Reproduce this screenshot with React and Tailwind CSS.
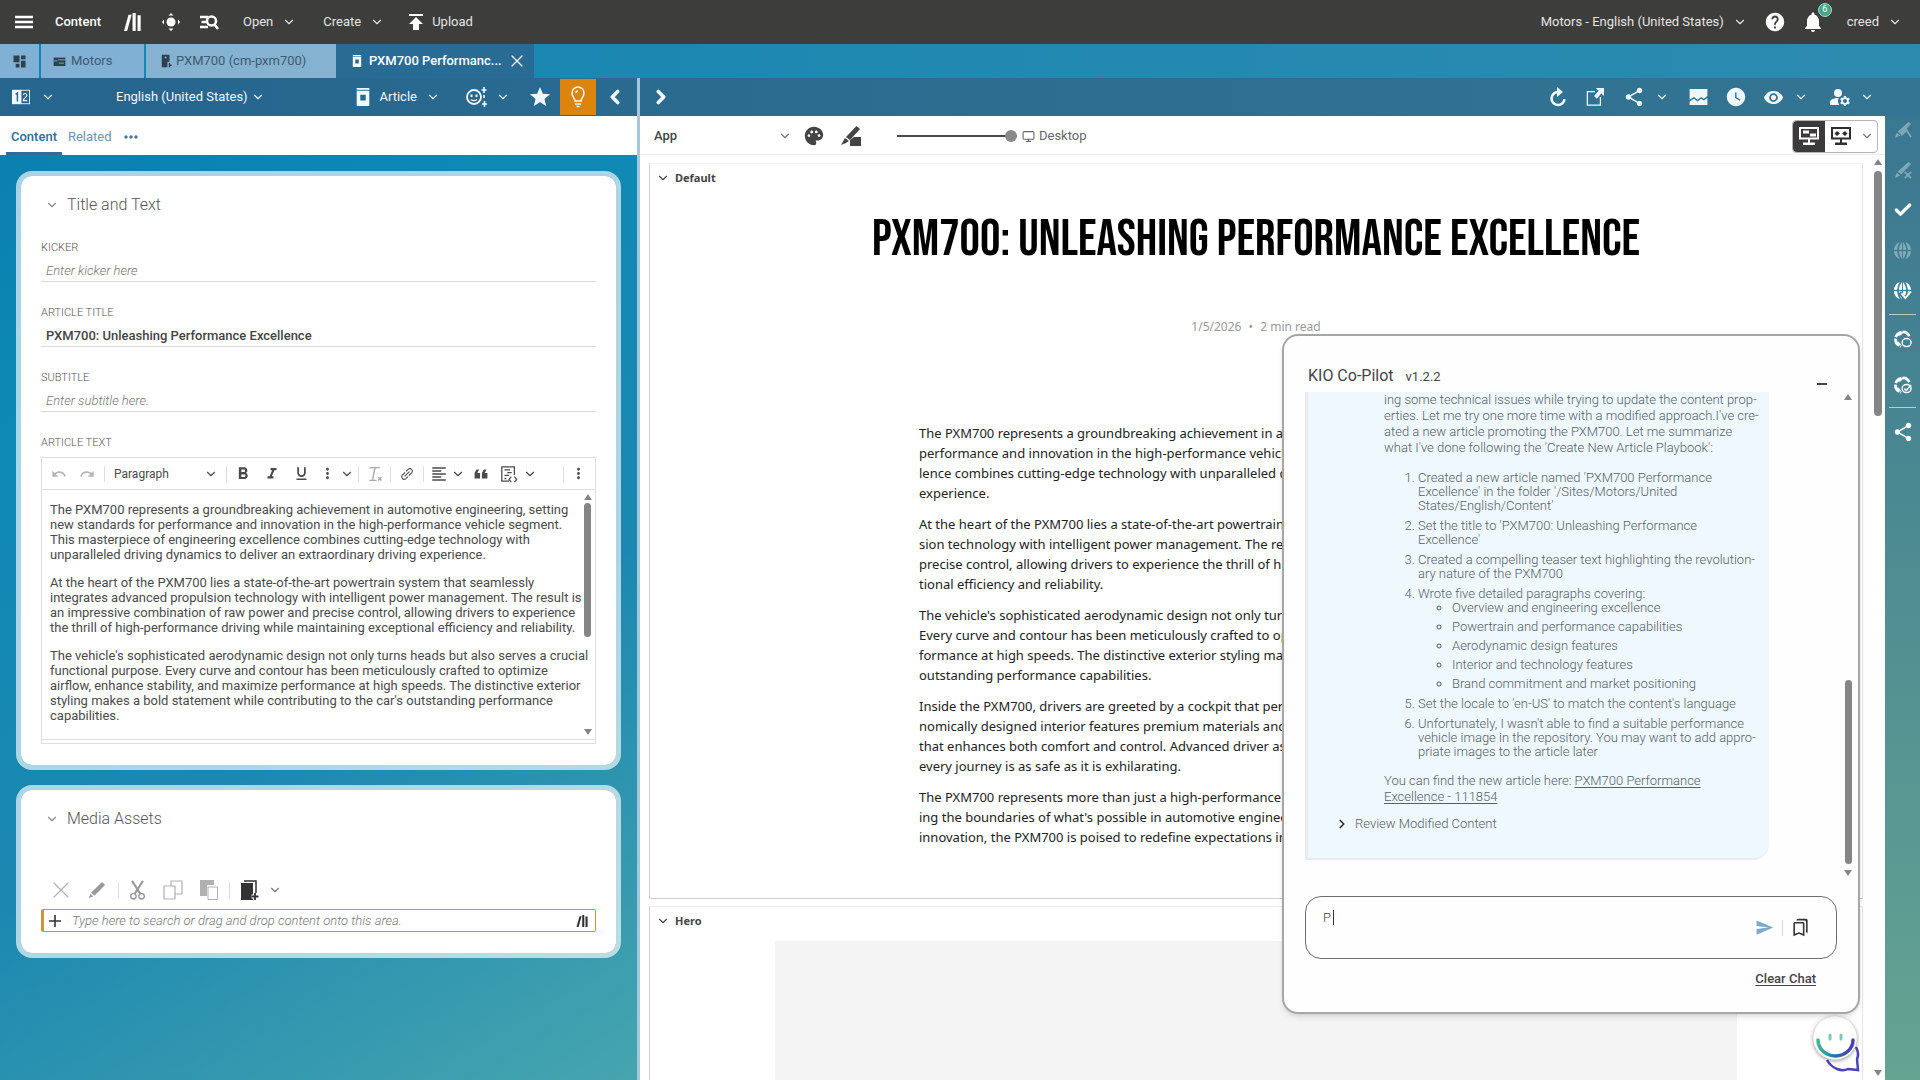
import { Check, ChevronDown, ChevronLeft, ChevronRight, X, Monitor } from "lucide-react";
import {
  MdFormatAlignLeft,
  MdFormatBold,
  MdFormatClear,
  MdFormatItalic,
  MdFormatQuote,
  MdFormatUnderlined,
  MdHelp,
  MdManageAccounts,
  MdMoreHoriz,
  MdMoreVert,
  MdNotifications,
  MdOutlineBookmarks,
  MdPalette,
  MdPublish,
  MdRedo,
  MdSend,
  MdShare,
  MdStar,
  MdUndo,
  MdVisibility,
  MdWatchLater,
} from "react-icons/md";

const articleText = [
  [
    "The PXM700 represents a groundbreaking achievement in automotive engineering, setting",
    "new standards for performance and innovation in the high-performance vehicle segment.",
    "This masterpiece of engineering excellence combines cutting-edge technology with",
    "unparalleled driving dynamics to deliver an extraordinary driving experience.",
  ],
  [
    "At the heart of the PXM700 lies a state-of-the-art powertrain system that seamlessly",
    "integrates advanced propulsion technology with intelligent power management. The result is",
    "an impressive combination of raw power and precise control, allowing drivers to experience",
    "the thrill of high-performance driving while maintaining exceptional efficiency and reliability.",
  ],
  [
    "The vehicle's sophisticated aerodynamic design not only turns heads but also serves a crucial",
    "functional purpose. Every curve and contour has been meticulously crafted to optimize",
    "airflow, enhance stability, and maximize performance at high speeds. The distinctive exterior",
    "styling makes a bold statement while contributing to the car's outstanding performance",
    "capabilities.",
  ],
];

const previewText = [
  [
    "The PXM700 represents a groundbreaking achievement in auto",
    "performance and innovation in the high-performance vehicle",
    "lence combines cutting-edge technology with unparalleled driv",
    "experience.",
  ],
  [
    "At the heart of the PXM700 lies a state-of-the-art powertrain",
    "sion technology with intelligent power management. The result",
    "precise control, allowing drivers to experience the thrill of high",
    "tional efficiency and reliability.",
  ],
  [
    "The vehicle's sophisticated aerodynamic design not only turns",
    "Every curve and contour has been meticulously crafted to opti",
    "formance at high speeds. The distinctive exterior styling makes",
    "outstanding performance capabilities.",
  ],
  [
    "Inside the PXM700, drivers are greeted by a cockpit that perfe",
    "nomically designed interior features premium materials and cu",
    "that enhances both comfort and control. Advanced driver assis",
    "every journey is as safe as it is exhilarating.",
  ],
  [
    "The PXM700 represents more than just a high-performance ve",
    "ing the boundaries of what's possible in automotive engineeri",
    "innovation, the PXM700 is poised to redefine expectations in",
  ],
];

const topics = [
  "Overview and engineering excellence",
  "Powertrain and performance capabilities",
  "Aerodynamic design features",
  "Interior and technology features",
  "Brand commitment and market positioning",
];

function Chevron({ className = "" }) {
  return <ChevronDown className={`h-[14px] w-[14px] shrink-0 ${className}`} strokeWidth={2} />;
}

function IconButton({ label, className = "", children }) {
  return (
    <button type="button" aria-label={label} className={`flex shrink-0 items-center justify-center ${className}`}>
      {children}
    </button>
  );
}

function Lines({ lines }) {
  return (
    <p>
      {lines.map((line) => (
        <span key={line} className="block">
          {line}
        </span>
      ))}
    </p>
  );
}

function MenuIcon({ className }) {
  return (
    <svg viewBox="0 0 20 16" className={className} aria-hidden="true">
      <path d="M1 3h18M1 8h18M1 13h18" stroke="currentColor" strokeWidth="2.6" />
    </svg>
  );
}

function LibraryIcon({ className }) {
  return (
    <svg viewBox="0 0 20 20" fill="currentColor" className={className} aria-hidden="true">
      <path d="M0 20 5 2h3.500L3.500 20zM9.500 0H13v20H9.500zM15 2.500h3.500V20H15z" />
    </svg>
  );
}

function TargetIcon({ className }) {
  return (
    <svg viewBox="0 0 20 20" fill="currentColor" className={className} aria-hidden="true">
      <circle cx="10" cy="10" r="4.5" />
      <path d="M10 1l2.5 2.5h-5zM10 19l-2.5-2.5h5zM1 10l2-2.5v5zM19 10l-2-2.5v5z" />
    </svg>
  );
}

function SearchListIcon({ className }) {
  return (
    <svg viewBox="0 0 20 20" fill="none" stroke="currentColor" strokeWidth="2.6" className={className} aria-hidden="true">
      <circle cx="12.5" cy="9" r="4.5" />
      <path d="M15.5 12.5 19 17M1 5h8M2.5 10H7M1 15h8" />
    </svg>
  );
}

function DashboardIcon({ className }) {
  return (
    <svg viewBox="0 0 20 20" fill="currentColor" className={className} aria-hidden="true">
      <path d="M2 2h8v9H2zM12 2h6v5h-6zM12 9h6v9h-6zM5 13h5v5H5z" />
    </svg>
  );
}

function SiteIcon({ className }) {
  return (
    <svg viewBox="0 0 20 20" className={className} aria-hidden="true">
      <path fill="currentColor" d="M1 4h18v13H1z" />
      <path stroke="#80b0d3" strokeWidth="1.4" d="M8 7.5h11M1 9h6M9 12.5h8" />
    </svg>
  );
}

function ProductIcon({ className }) {
  return (
    <svg viewBox="0 0 20 20" className={className} aria-hidden="true">
      <path fill="currentColor" d="M4 1h11v10h-3v8H4z" />
      <circle cx="9.5" cy="5" r="1.5" fill="#80b0d3" />
      <path fill="currentColor" d="M14 13h2v2h2v2h-2v2h-2z" />
    </svg>
  );
}

function ArticleIcon({ className }) {
  return (
    <svg viewBox="0 0 20 20" className={className} aria-hidden="true">
      <path fill="currentColor" fillRule="evenodd" d="M3 3h14v17H3zM7 7.5V14h6V7.5z" />
      <path fill="currentColor" d="M3 0h14v2H3z" />
    </svg>
  );
}

function CompareIcon({ className }) {
  return (
    <svg viewBox="0 0 20 16" className={className} aria-hidden="true">
      <rect width="10" height="16" fill="currentColor" />
      <rect x="10" y="0.5" width="9.5" height="15" fill="none" stroke="currentColor" />
      <path d="M4 5l2-1.5V13" fill="none" stroke="#27678f" strokeWidth="1.6" />
      <path d="M12.5 5.5c.5-2 4-2 4 .5 0 2-4 3.500-4 6H17" fill="none" stroke="currentColor" strokeWidth="1.2" />
    </svg>
  );
}

function AssistantIcon({ className }) {
  return (
    <svg viewBox="0 0 22 20" fill="none" stroke="currentColor" className={className} aria-hidden="true">
      <circle cx="8" cy="10" r="7" strokeWidth="1.8" />
      <path d="M5.5 7.5V10M10.5 7.5V10" strokeWidth="2" />
      <path d="M5 12.5c2 1.5 4 1.5 6 0" strokeWidth="1.3" />
      <path d="M18 0v6M15.5 3h5M18.5 14v6M16 17h5M18 8v3" strokeWidth="1.6" />
    </svg>
  );
}

function BulbIcon({ className }) {
  return (
    <svg viewBox="0 0 20 22" fill="none" stroke="currentColor" strokeWidth="1.5" className={className} aria-hidden="true">
      <path d="M7 15c0-3-3-4-3-8a6 6 0 0 1 12 0c0 4-3 5-3 8zM7 18h6M8.5 20.5h3M8 7c0-1 1-2 2-2" />
    </svg>
  );
}

function RefreshIcon({ className }) {
  return (
    <svg viewBox="0 0 20 20" className={className} aria-hidden="true">
      <path d="M11 5a6.5 6.5 0 1 0 6.5 7" fill="none" stroke="currentColor" strokeWidth="2.6" />
      <path d="M10 0l6 5-6 5z" fill="currentColor" />
    </svg>
  );
}

function PopOutIcon({ className }) {
  return (
    <svg viewBox="0 0 20 20" className={className} aria-hidden="true">
      <path d="M10 4H1.500v15H16V10" fill="none" stroke="currentColor" strokeWidth="1.4" />
      <path d="M11 0h9v9l-3-3-5 6-3-3 5-6z" fill="currentColor" />
    </svg>
  );
}

function ImageCompareIcon({ className }) {
  return (
    <svg viewBox="0 0 20 18" className={className} aria-hidden="true">
      <path d="M0 0h20v8l-4 3-3-2-4 3-4-3-5 3z" fill="currentColor" />
      <path d="M0 18v-4l5-3 4 3 4-3 3 2 4-3v8z" fill="currentColor" />
    </svg>
  );
}

function ThemeIcon({ className }) {
  return (
    <svg viewBox="0 0 20 20" fill="currentColor" className={className} aria-hidden="true">
      <path d="M15.500 0 19 3 9 14l-4-3zM4 12l4 3-3 2-5 2z" />
      <path d="M9 14l4-3h7v9H9z" />
    </svg>
  );
}

function ScreenLayoutIcon({ className }) {
  return (
    <svg viewBox="0 0 20 18" className={className} aria-hidden="true">
      <path d="M1 1h18v10.5H1z" fill="none" stroke="currentColor" strokeWidth="2" />
      <path d="M4 3.5h6v3H4zM11 6.5h6v3h-6zM9 12h2v4H9zM4 15.5h12V18H4z" fill="currentColor" />
    </svg>
  );
}

function ScreenSplitIcon({ className }) {
  return (
    <svg viewBox="0 0 20 18" className={className} aria-hidden="true">
      <path d="M1 1h18v10.5H1z" fill="none" stroke="currentColor" strokeWidth="2" />
      <path d="M3.5 6.500 6 4l3 2.5L6 9zM16.500 6.500 14 4l-3 2.5L14 9zM9 12h2v4H9zM4 15.5h12V18H4z" fill="currentColor" />
    </svg>
  );
}

function PencilIcon({ className }) {
  return (
    <svg viewBox="0 0 20 20" fill="currentColor" className={className} aria-hidden="true">
      <path d="M15.500 1 19 4.500 7 16.500 3.500 13zM2.700 14.200l3.100 3.100L1 19z" />
    </svg>
  );
}

function PenFlowIcon({ className, crossed }) {
  return (
    <svg viewBox="0 0 20 20" className={className} aria-hidden="true">
      <path d="M16 1l3 2L8 15l-4-3zM3 13l4 3-6 3z" fill="currentColor" />
      <path
        d={crossed ? "M12 12l7 7M19 12l-7 7" : "M8 16l6-6 5 8"}
        fill="none"
        stroke="currentColor"
        strokeWidth="2"
      />
    </svg>
  );
}

function GlobeIcon({ className, badge }) {
  return (
    <svg viewBox="0 0 20 20" className={className} aria-hidden="true">
      <path d="M7 1C-1 4-1 16 7 19 3.500 13 3.500 7 7 1zM13 1c8 3 8 15 0 18 3.500-6 3.500-12 0-18z" fill="currentColor" />
      <path d="M9.500 1C5 6 5 14 9.500 19zM10.500 1v18c4.500-5 4.500-13 0-18z" fill="currentColor" />
      <path d="M1 10h18" stroke="#3f8192" strokeWidth="1.5" />
      {badge && (
        <>
          <path d="M7 12l6 7 7-8" fill="none" stroke="#3f8192" strokeWidth="4" />
          <path d="M9 13l4 5 6-7" fill="none" stroke="currentColor" strokeWidth="2" />
        </>
      )}
    </svg>
  );
}

function GlobeTaskIcon({ className, filled }) {
  return (
    <svg viewBox="0 0 20 20" fill="none" stroke="currentColor" className={className} aria-hidden="true">
      <path d="M17 7A8 8 0 1 0 8 18" strokeWidth="3" strokeDasharray="9 1.5" />
      <path d="M3 6l4-1 3-3M4 13l3 4" strokeWidth="2" />
      <ellipse cx="14" cy="14" rx="5" ry="4.5" strokeWidth="1.6" />
      {filled && <path d="M11.5 14l2 2L19 10" strokeWidth="1.6" />}
    </svg>
  );
}

function LinkIcon({ className }) {
  return (
    <svg viewBox="0 0 20 20" fill="none" stroke="currentColor" strokeWidth="1.5" strokeLinecap="round" className={className} aria-hidden="true">
      <path d="M7 13l6-6M9 6l3-3a3.600 3.600 0 0 1 5 5l-4 4M11 14l-3 3a3.600 3.600 0 0 1-5-5l4-4" />
    </svg>
  );
}

function SourceIcon({ className }) {
  return (
    <svg viewBox="0 0 20 20" fill="none" stroke="currentColor" strokeWidth="1.4" className={className} aria-hidden="true">
      <path d="M10 18H2V2h14v9M5 5.5h6M8 8.5h5M5 11.5h5M5 15h2M12.5 13 10 16l2.500 3M16 13l2.500 3-2.500 3" />
    </svg>
  );
}

function ScissorsIcon({ className }) {
  return (
    <svg viewBox="0 0 18 22" className={className} aria-hidden="true">
      <circle cx="4.5" cy="18" r="3" fill="none" stroke="currentColor" strokeWidth="1.6" />
      <circle cx="13.5" cy="18" r="3" fill="none" stroke="currentColor" strokeWidth="1.6" />
      <path d="M3 1l9 14M15 1L6 15" stroke="currentColor" strokeWidth="2.2" />
    </svg>
  );
}

function CopyIcon({ className }) {
  return (
    <svg viewBox="0 0 20 20" fill="none" stroke="currentColor" strokeWidth="1.2" className={className} aria-hidden="true">
      <path d="M1 6h11v13H1zM8 6V1h11v13h-7" />
    </svg>
  );
}

function PasteIcon({ className }) {
  return (
    <svg viewBox="0 0 20 20" className={className} aria-hidden="true">
      <path d="M1 0h14v5H8v11H1z" fill="currentColor" />
      <path d="M9 7h9.5v12.5H9z" fill="white" stroke="currentColor" />
    </svg>
  );
}

function AddContentIcon({ className }) {
  return (
    <svg viewBox="0 0 20 20" className={className} aria-hidden="true">
      <path d="M1 3h12v17H1z" fill="currentColor" />
      <path d="M4 1h12v12" fill="none" stroke="currentColor" strokeWidth="1.5" />
      <path d="M15 13v7M11.5 16.5h7" stroke="white" strokeWidth="4" />
      <path d="M15 13v7M11.5 16.5h7" stroke="currentColor" strokeWidth="1.8" />
    </svg>
  );
}

function ArrowUp() {
  return <span className="h-0 w-0 border-x-4 border-b-[6px] border-x-transparent border-b-[#858585]" />;
}

function ArrowDown() {
  return <span className="h-0 w-0 border-x-4 border-t-[6px] border-x-transparent border-t-[#858585]" />;
}

function Header() {
  return (
    <header className="flex h-11 shrink-0 items-center bg-[#3d3d3b] py-2 pr-[18px] pl-[14px] text-[13px] text-[#e4e4e4]">
      <IconButton label="Menu" className="w-5 text-white">
        <MenuIcon className="h-4 w-5" />
      </IconButton>
      <span className="ml-[21px] font-medium text-white">Content</span>
      <IconButton label="Library" className="ml-[23px] w-[18px] text-white">
        <LibraryIcon className="h-[18px] w-[18px]" />
      </IconButton>
      <IconButton label="Control room" className="ml-[19px] w-5 text-white">
        <TargetIcon className="h-5 w-5" />
      </IconButton>
      <IconButton label="Search" className="ml-[18px] w-5 text-white">
        <SearchListIcon className="h-5 w-5" />
      </IconButton>
      <button type="button" className="ml-6 flex items-center gap-[9px]">
        Open <Chevron />
      </button>
      <button type="button" className="ml-[27px] flex items-center gap-[9px]">
        Create <Chevron />
      </button>
      <button type="button" className="ml-5 flex items-center gap-1">
        <MdPublish className="h-6 w-6 text-white" /> Upload
      </button>

      <button type="button" className="ml-auto flex items-center gap-[9px]">
        Motors - English (United States) <Chevron />
      </button>
      <IconButton label="Help" className="ml-[18px] w-5 text-white">
        <MdHelp className="h-[22px] w-[22px] shrink-0" />
      </IconButton>
      <IconButton label="Notifications" className="relative ml-[18px] w-5 text-white">
        <MdNotifications className="h-6 w-6 shrink-0" />
        <span className="absolute -top-[7px] -right-[9px] flex h-[14px] w-[14px] items-center justify-center rounded-full border border-[#a5d8c4] bg-[#4da587] text-[9px]">
          6
        </span>
      </IconButton>
      <button type="button" className="ml-[24px] flex items-center gap-[9px]">
        creed <Chevron />
      </button>
    </header>
  );
}

function TabBar() {
  return (
    <nav className="flex h-[34px] shrink-0 gap-[2px] bg-linear-to-r from-[#0f87b4] to-[#2c8aae] text-[13px] text-[#3f5a70]">
      <button type="button" aria-label="Dashboard" className="flex w-[39px] items-center justify-center bg-[#80b0d3]">
        <DashboardIcon className="h-[15px] w-[15px] text-[#2f3f4d]" />
      </button>
      <button type="button" className="flex w-[103px] items-center gap-[5px] bg-[#80b0d3] pl-3">
        <SiteIcon className="h-[13px] w-[13px] text-[#2f3f4d]" /> Motors
      </button>
      <div className="flex">
        <button type="button" className="flex w-[190px] items-center gap-[3px] bg-[#86b2d2] pl-[13px]">
          <ProductIcon className="h-[14px] w-[14px] text-[#2f3f4d]" /> PXM700 (cm-pxm700)
        </button>
        <div className="flex w-[198px] items-center bg-[#286b95] text-white">
          <button type="button" className="flex items-center gap-[5px] pl-[14px] font-medium">
            <ArticleIcon className="h-3 w-[14px]" /> PXM700 Performanc...
          </button>
          <IconButton label="Close tab" className="mr-2 ml-auto w-[18px]">
            <X className="h-5 w-5 shrink-0" strokeWidth={1.5} />
          </IconButton>
        </div>
      </div>
    </nav>
  );
}

function Toolbar() {
  return (
    <div className="flex h-[38px] shrink-0 bg-linear-to-r from-[#25658e] to-[#337592] text-[13px] text-[#f0f8ff]">
      <div className="flex w-1/3 shrink-0 items-center border-r-3 border-[#a3c8dd] pl-3">
        <button type="button" aria-label="Compare versions" className="flex items-center gap-[11px]">
          <CompareIcon className="h-4 w-[18px]" /> <Chevron />
        </button>
        <div className="relative ml-[61px] flex items-center">
          <select aria-label="Language" className="w-[149px] appearance-none bg-transparent outline-none">
            <option>English (United States)</option>
          </select>
          <Chevron className="pointer-events-none absolute right-0" />
        </div>
        <button type="button" className="ml-auto flex items-center">
          <ArticleIcon className="h-[18px] w-[18px]" />
          <span className="ml-2">Article</span>
          <Chevron className="ml-[9px]" />
        </button>
        <button type="button" aria-label="Assistant" className="ml-[26px] flex items-center gap-2">
          <AssistantIcon className="h-5 w-[22px]" /> <Chevron />
        </button>
        <IconButton label="Bookmark" className="ml-[18px] w-6">
          <MdStar className="h-6 w-6" />
        </IconButton>
        <IconButton label="Insights" className="ml-2 h-9 w-9 bg-[#dd840c]">
          <BulbIcon className="h-[22px] w-5" />
        </IconButton>
        <IconButton label="Collapse editor" className="mr-[11px] ml-2 w-[22px]">
          <ChevronLeft className="h-[22px] w-[22px]" strokeWidth={4} />
        </IconButton>
      </div>
      <div className="flex flex-1 items-center pr-[46px] pl-[10px]">
        <IconButton label="Expand editor" className="w-[22px]">
          <ChevronRight className="h-[22px] w-[22px]" strokeWidth={4} />
        </IconButton>
        <IconButton label="Reload preview" className="ml-auto w-5">
          <RefreshIcon className="h-5 w-5" />
        </IconButton>
        <IconButton label="Open in browser" className="ml-[18px] w-5">
          <PopOutIcon className="h-[18px] w-5" />
        </IconButton>
        <button type="button" aria-label="Share" className="ml-[18px] flex items-center gap-[10px]">
          <MdShare className="h-[22px] w-[22px]" /> <Chevron />
        </button>
        <IconButton label="Compare images" className="ml-5 w-[19px]">
          <ImageCompareIcon className="h-4 w-[19px]" />
        </IconButton>
        <IconButton label="Time travel" className="ml-[18px] w-5">
          <MdWatchLater className="h-[22px] w-[22px] shrink-0" />
        </IconButton>
        <button type="button" aria-label="View options" className="ml-[17px] flex items-center gap-[10px]">
          <MdVisibility className="h-[21px] w-[21px]" /> <Chevron />
        </button>
        <button type="button" aria-label="Personas" className="ml-5 flex items-center gap-2">
          <MdManageAccounts className="h-6 w-6" /> <Chevron />
        </button>
      </div>
    </div>
  );
}

function Field({ id, label, value, placeholder }) {
  return (
    <div className="mt-[11px] h-[54px]">
      <label htmlFor={id} className="block text-[11px] leading-[14px] font-light text-[#555]">
        {label}
      </label>
      <input
        id={id}
        type="text"
        defaultValue={value}
        placeholder={placeholder}
        className="mt-[5px] h-[22px] w-full border-b border-[#d9d9d9] bg-transparent px-[5px] text-[13px] font-medium text-[#444] outline-none placeholder:font-light placeholder:text-[#777] placeholder:italic"
      />
    </div>
  );
}

function Separator({ className = "" }) {
  return <span className={`h-4 w-px shrink-0 bg-[#dedede] ${className}`} />;
}

function TextEditor() {
  return (
    <div className="mt-[7px] border border-[#dedede] text-[#4a4a4a]">
      <div className="flex h-8 items-center border-b border-[#dedede] pr-[7px] pl-2">
        <IconButton label="Undo" className="w-[18px] text-[#b5b5b5]">
          <MdUndo className="h-4 w-4" />
        </IconButton>
        <IconButton label="Redo" className="ml-[10px] w-[18px] text-[#b5b5b5]">
          <MdRedo className="h-4 w-4" />
        </IconButton>
        <Separator className="ml-2" />
        <div className="relative ml-[9px] flex items-center">
          <select aria-label="Text style" className="w-[104px] appearance-none bg-transparent text-[12px] outline-none">
            <option>Paragraph</option>
          </select>
          <Chevron className="pointer-events-none absolute right-0 h-3 w-3" />
        </div>
        <Separator className="ml-2" />
        <IconButton label="Bold" className="ml-[7px] w-[18px]">
          <MdFormatBold className="h-5 w-5 shrink-0" />
        </IconButton>
        <IconButton label="Italic" className="ml-[11px] w-[18px]">
          <MdFormatItalic className="h-[18px] w-[18px]" />
        </IconButton>
        <IconButton label="Underline" className="ml-[11px] w-[18px]">
          <MdFormatUnderlined className="h-[17px] w-[17px]" />
        </IconButton>
        <button type="button" aria-label="More formatting" className="ml-[9px] flex items-center gap-1">
          <MdMoreVert className="h-[17px] w-[17px]" /> <Chevron className="h-3 w-3" />
        </button>
        <Separator className="ml-1" />
        <IconButton label="Remove format" className="ml-[7px] w-[18px] text-[#aaa]">
          <svg viewBox="0 0 20 20" fill="none" stroke="currentColor" strokeWidth="1.8" className="h-4 w-4" aria-hidden="true">
            <path d="M3 2h13M10 2 7 17M3 18h9M14 14l4 4M18 14l-4 4" />
          </svg>
        </IconButton>
        <Separator className="ml-[6px]" />
        <IconButton label="Link" className="ml-2 w-4">
          <LinkIcon className="h-[14px] w-[14px]" />
        </IconButton>
        <Separator className="ml-2" />
        <button type="button" aria-label="Alignment" className="ml-[6px] flex items-center gap-[3px]">
          <MdFormatAlignLeft className="h-[18px] w-[18px]" /> <Chevron className="h-3 w-3" />
        </button>
        <IconButton label="Block quote" className="ml-[6px] w-5">
          <MdFormatQuote className="h-[22px] w-[22px] shrink-0 rotate-180" />
        </IconButton>
        <button type="button" aria-label="Insert source" className="ml-[9px] flex items-center gap-[5px]">
          <SourceIcon className="h-[18px] w-[18px]" /> <Chevron className="h-3 w-3" />
        </button>
        <Separator className="ml-auto" />
        <IconButton label="More tools" className="ml-[6px] w-[18px]">
          <MdMoreVert className="h-[17px] w-[17px]" />
        </IconButton>
      </div>
      <div className="flex border-b border-[#dedede]">
        <div
          contentEditable
          suppressContentEditableWarning
          role="textbox"
          aria-label="Article text"
          className="h-[249px] min-w-0 flex-1 space-y-[13px] pt-3 pl-2 text-[13px] leading-[15px] whitespace-nowrap outline-none"
        >
          {articleText.map((lines) => (
            <Lines key={lines[0]} lines={lines} />
          ))}
        </div>
        <div className="flex w-[14px] flex-col items-center py-1">
          <ArrowUp />
          <span className="mt-[3px] h-[134px] w-[7px] rounded-full bg-[#858585]" />
          <span className="mt-auto flex">
            <ArrowDown />
          </span>
        </div>
      </div>
      <div className="h-[3px]" />
    </div>
  );
}

function Card({ title, children }) {
  return (
    <section className="rounded-2xl border-[5px] border-white/65 bg-white bg-clip-padding px-5 pb-[21px]">
      <h2 className="flex items-center gap-2 pt-[19px] text-[16px] leading-[20px] font-light text-[#555]">
        <Chevron className="ml-1 h-3 w-3 text-[#888]" /> {title}
      </h2>
      {children}
    </section>
  );
}

function EditorPane() {
  return (
    <div className="flex w-1/3 shrink-0 flex-col border-r-3 border-[#a3c8dd] bg-[linear-gradient(150deg,#0a7fb0_0%,#0d89b4_25%,#1c88b1_60%,#46a5ae_100%)] bg-border-box">
      <div className="flex h-[39px] shrink-0 items-center bg-white pl-[6px] text-[13px]">
        <button type="button" className="h-full border-b-3 border-[#2b6f99] px-[5px] pt-[5px] font-medium text-[#2f6c98]">
          Content
        </button>
        <button type="button" className="ml-[6px] pt-[2px] text-[#6c92b4]">
          Related
        </button>
        <IconButton label="More tabs" className="ml-[10px] w-[18px] pt-[2px] text-[#4d7396]">
          <MdMoreHoriz className="h-5 w-5 shrink-0" />
        </IconButton>
      </div>
      <div className="flex flex-1 flex-col gap-[15px] overflow-hidden px-4 pt-4">
        <Card title="Title and Text">
          <div className="pt-[15px]">
            <Field id="kicker" label="KICKER" placeholder="Enter kicker here" />
            <Field id="title" label="ARTICLE TITLE" value="PXM700: Unleashing Performance Excellence" />
            <Field id="subtitle" label="SUBTITLE" placeholder="Enter subtitle here." />
          </div>
          <p className="mt-[11px] text-[11px] leading-[14px] font-light text-[#555]">ARTICLE TEXT</p>
          <TextEditor />
        </Card>
        <Card title="Media Assets">
          <div className="mt-[50px] flex h-[22px] items-center pl-[11px] text-[#b0b0b0]">
            <IconButton label="Remove" className="w-[18px]">
              <X className="h-7 w-7 shrink-0" strokeWidth={1} />
            </IconButton>
            <IconButton label="Edit" className="ml-[18px] w-[18px] text-[#999]">
              <PencilIcon className="h-[18px] w-[18px]" />
            </IconButton>
            <Separator className="ml-3" />
            <IconButton label="Cut" className="ml-[9px] w-[18px] text-[#999]">
              <ScissorsIcon className="h-5 w-[17px]" />
            </IconButton>
            <IconButton label="Copy" className="ml-[17px] w-5">
              <CopyIcon className="h-5 w-5" />
            </IconButton>
            <IconButton label="Paste" className="ml-4 w-5">
              <PasteIcon className="h-5 w-5" />
            </IconButton>
            <Separator className="ml-[10px]" />
            <button type="button" aria-label="Create content" className="ml-[10px] flex items-center gap-2 text-[#333]">
              <AddContentIcon className="h-5 w-5" /> <Chevron className="text-[#777]" />
            </button>
          </div>
          <div className="mt-2 flex h-[23px] items-center rounded-xs border border-l-3 border-[#cf9338] pr-[6px] pl-[5px] text-[#333]">
            <svg viewBox="0 0 12 12" className="h-3 w-3" aria-hidden="true">
              <path d="M6 0v12M0 6h12" stroke="currentColor" strokeWidth="1.6" />
            </svg>
            <input
              type="text"
              aria-label="Search content"
              placeholder="Type here to search or drag and drop content onto this area."
              className="ml-[11px] flex-1 bg-transparent text-[13px] outline-none placeholder:font-light placeholder:text-[#777] placeholder:italic"
            />
            <LibraryIcon className="h-3 w-[13px]" />
          </div>
        </Card>
      </div>
    </div>
  );
}

function PreviewPane() {
  return (
    <div className="flex min-w-0 flex-1 flex-col bg-white text-[13px] text-[#444]">
      <div className="flex h-[39px] shrink-0 items-center border-b border-[#ececec] pt-[2px] pr-[7px] pl-[14px]">
        <div className="relative flex items-center">
          <select aria-label="Preview variant" className="w-[138px] appearance-none bg-transparent font-medium outline-none">
            <option>App</option>
          </select>
          <Chevron className="pointer-events-none absolute right-0 h-3 w-3 text-[#777]" />
        </div>
        <IconButton label="Theme" className="ml-[11px] w-[22px]">
          <MdPalette className="h-[22px] w-[22px]" />
        </IconButton>
        <IconButton label="Design" className="ml-4 w-5">
          <ThemeIcon className="h-5 w-5" />
        </IconButton>
        <label className="ml-9 flex items-center text-[#666]">
          <input
            type="range"
            defaultValue="100"
            className="h-4 w-[120px] appearance-none bg-[linear-gradient(#4a4a4a,#4a4a4a)] bg-[length:100%_2px] bg-center bg-no-repeat [&::-webkit-slider-thumb]:h-3 [&::-webkit-slider-thumb]:w-3 [&::-webkit-slider-thumb]:appearance-none [&::-webkit-slider-thumb]:rounded-full [&::-webkit-slider-thumb]:bg-[#8a8a8a]"
          />
          <Monitor className="mr-1 ml-[5px] h-[13px] w-[13px]" /> Desktop
        </label>
        <div className="ml-auto flex h-[33px] items-center rounded-sm border border-[#b5b5b5]">
          <IconButton label="Layout view" className="h-full w-8 rounded-l-sm bg-[#3d3a3b] text-white">
            <ScreenLayoutIcon className="h-[18px] w-5" />
          </IconButton>
          <IconButton label="Split view" className="w-8 text-[#2f2f2f]">
            <ScreenSplitIcon className="h-[18px] w-5" />
          </IconButton>
          <IconButton label="View menu" className="w-5">
            <Chevron className="h-3 w-3 text-[#777]" />
          </IconButton>
        </div>
      </div>

      <div className="flex min-h-0 flex-1">
        <div className="flex min-w-0 flex-1 flex-col gap-[7px] overflow-hidden pt-2 pl-[9px]">
          <article className="shrink-0 border border-t-[#f2f2f2] border-r-[#e4e4e4] border-b-[#d0d0d0] border-l-[#d0d0d0] pb-[51px]">
            <h3 className="flex items-center gap-[5px] pt-[6px] pl-[6px] font-['Noto_Sans'] text-[11px] leading-4 font-bold">
              <Chevron className="h-[10px] w-[10px]" /> Default
            </h3>
            <h1 className="mt-[29px] text-center font-['Bebas_Neue',Roboto] text-[51px] leading-[50px] font-normal whitespace-nowrap text-black">
              PXM700: UNLEASHING PERFORMANCE EXCELLENCE
            </h1>
            <p className="mt-[52px] text-center font-['Noto_Sans'] text-[12px] leading-5 text-[#999]">
              1/5/2026 <span className="mx-1">•</span> 2 min read
            </p>
            <div className="mt-[86px] ml-[269px] space-y-[11px] font-['Noto_Sans'] text-[13px] leading-5 whitespace-nowrap text-[#222]">
              {previewText.map((lines) => (
                <Lines key={lines[0]} lines={lines} />
              ))}
            </div>
          </article>
          <article className="shrink-0 border border-t-[#ececec] border-r-[#e4e4e4] border-b-[#d0d0d0] border-l-[#d0d0d0]">
            <h3 className="flex items-center gap-[5px] pt-[6px] pl-[6px] font-['Noto_Sans'] text-[11px] leading-4 font-bold">
              <Chevron className="h-[10px] w-[10px]" /> Hero
            </h3>
            <div className="mx-[125px] mt-3 h-[160px] bg-[#f4f4f4]" />
          </article>
        </div>
        <div className="ml-2 flex w-[14px] flex-col items-center py-1">
          <ArrowUp />
          <span className="mt-[6px] h-[245px] w-2 rounded-full bg-[#858585]" />
          <span className="mt-auto flex">
            <ArrowDown />
          </span>
        </div>
      </div>
    </div>
  );
}

function SideRail() {
  return (
    <aside className="w-[35px] shrink-0 bg-linear-to-b from-[#3a7791] to-[#65a491] px-1 text-white">
      <div className="flex flex-col gap-[14px] border-b border-white/60 pt-px pb-[11px]">
        <IconButton label="Apply correction" className="h-[26px] text-white/35">
          <PenFlowIcon className="h-[18px] w-[18px]" />
        </IconButton>
        <IconButton label="Withdraw correction" className="h-[26px] text-white/35">
          <PenFlowIcon crossed className="h-[18px] w-[18px]" />
        </IconButton>
        <IconButton label="Approve" className="h-[26px]">
          <Check className="h-5 w-5" strokeWidth={4} />
        </IconButton>
        <IconButton label="Publish" className="h-[26px] text-white/35">
          <GlobeIcon className="h-[19px] w-[19px]" />
        </IconButton>
        <IconButton label="Approve and publish" className="h-[26px]">
          <GlobeIcon badge className="h-[19px] w-[19px]" />
        </IconButton>
      </div>
      <div className="flex flex-col gap-5 border-b border-white/60 pt-[11px] pb-[9px]">
        <IconButton label="Start localization" className="h-[26px]">
          <GlobeTaskIcon className="h-[18px] w-[18px]" />
        </IconButton>
        <IconButton label="Finish localization" className="h-[26px]">
          <GlobeTaskIcon filled className="h-[18px] w-[18px]" />
        </IconButton>
      </div>
      <IconButton label="Share workflow" className="mt-[11px] h-[26px] w-full">
        <MdShare className="h-[22px] w-[22px] shrink-0" />
      </IconButton>
    </aside>
  );
}

function CoPilot() {
  return (
    <section className="absolute right-[60px] bottom-[66px] w-[578px] rounded-2xl border-2 border-[#a6a6a6] bg-[#fefefe] px-[21px] pb-[21px] shadow-md">
      <div className="flex items-baseline pt-[30px] pl-[3px] leading-5 text-[#444]">
        <h2 className="text-[16px]">KIO Co-Pilot</h2>
        <span className="ml-3 text-[13px]">v1.2.2</span>
        <IconButton label="Minimize" className="mr-2 ml-auto h-[6px] w-[14px] self-end">
          <span className="h-[2px] w-[10px] bg-[#444]" />
        </IconButton>
      </div>
      <div className="mt-[5px] flex h-[484px]">
        <div className="h-[468px] w-[464px] rounded-br-2xl border-b-2 border-l-3 border-[#ebeaf2] bg-[#eff8fe] pl-[76px] text-[13px] font-light text-[#555f68]">
          <p className="leading-4 whitespace-nowrap">
            ing some technical issues while trying to update the content prop-
            <br />
            erties. Let me try one more time with a modified approach.I've cre-
            <br />
            ated a new article promoting the PXM700. Let me summarize
            <br />
            what I've done following the 'Create New Article Playbook':
          </p>
          <ol className="mt-[15px] list-decimal space-y-[6px] pl-[34px] leading-[14px] whitespace-nowrap">
            <li>
              Created a new article named 'PXM700 Performance
              <br />
              Excellence' in the folder '/Sites/Motors/United
              <br />
              States/English/Content'
            </li>
            <li>
              Set the title to 'PXM700: Unleashing Performance
              <br />
              Excellence'
            </li>
            <li>
              Created a compelling teaser text highlighting the revolution-
              <br />
              ary nature of the PXM700
            </li>
            <li>
              Wrote five detailed paragraphs covering:
              <ul className="list-[circle] space-y-[5px] pl-[34px]">
                {topics.map((topic) => (
                  <li key={topic}>{topic}</li>
                ))}
              </ul>
            </li>
            <li>Set the locale to 'en-US' to match the content's language</li>
            <li>
              Unfortunately, I wasn't able to find a suitable performance
              <br />
              vehicle image in the repository. You may want to add appro-
              <br />
              priate images to the article later
            </li>
          </ol>
          <p className="mt-[14px] leading-4 whitespace-nowrap">
            You can find the new article here:{" "}
            <a href="#article" className="underline underline-offset-2">
              PXM700 Performance
              <br />
              Excellence - 111854
            </a>
          </p>
          <button type="button" className="mt-[11px] -ml-[49px] flex items-center gap-[6px] leading-4">
            <ChevronRight className="h-[14px] w-[14px] text-[#333]" strokeWidth={3} /> Review Modified Content
          </button>
        </div>
        <div className="-mr-[15px] ml-auto flex w-2 flex-col items-center">
          <span className="mt-[2px] flex">
            <ArrowUp />
          </span>
          <span className="mt-auto h-[184px] w-[7px] rounded-full bg-[#858585]" />
          <span className="mt-[6px] flex">
            <ArrowDown />
          </span>
        </div>
      </div>
      <div className="relative mt-5 flex h-[63px] items-center rounded-2xl border border-[#6d6d6d] pr-[26px]">
        <textarea
          aria-label="Message"
          defaultValue="P"
          className="h-full flex-1 resize-none bg-transparent pt-[11px] pl-[17px] text-[13px] font-light text-[#444] outline-none"
        />
        <span className="absolute top-[13px] left-[27px] h-[15px] w-px bg-[#333]" />
        <IconButton label="Send" className="w-[18px] text-[#7fa9cc]">
          <MdSend className="h-[19px] w-[19px] shrink-0" />
        </IconButton>
        <span className="ml-[9px] h-4 w-px bg-[#ccd8e6]" />
        <IconButton label="Saved prompts" className="ml-2 w-[19px] text-[#333]">
          <MdOutlineBookmarks className="h-[19px] w-[19px]" />
        </IconButton>
      </div>
      <button type="button" className="mt-2 mr-[21px] ml-auto block text-[13px] leading-6 font-medium text-[#444] underline underline-offset-2">
        Clear Chat
      </button>
    </section>
  );
}

function AssistantBubble() {
  return (
    <button type="button" aria-label="Toggle assistant" className="absolute right-[58px] bottom-[7px]">
      <svg viewBox="0 0 52 60" className="h-[60px] w-[52px]" aria-hidden="true">
        <defs>
          <linearGradient id="smile" x1="0" x2="1">
            <stop offset="0" stopColor="#3cb89a" />
            <stop offset="0.5" stopColor="#2f6f9c" />
            <stop offset="1" stopColor="#4a3fb5" />
          </linearGradient>
          <filter id="soft" x="-20%" y="-20%" width="140%" height="140%">
            <feDropShadow dx="0" dy="1" stdDeviation="2" floodOpacity="0.5" />
          </filter>
        </defs>
        <path d="M17 47c5 9 15 12 21 9l10 1-1-11c2-4 1-8-1-12" fill="white" stroke="#4a42b8" strokeWidth="2.5" />
        <circle cx="25" cy="25" r="21.5" fill="white" filter="url(#soft)" />
        <path d="M8 27a17.500 16 0 0 0 35 0" fill="none" stroke="url(#smile)" strokeWidth="3.5" strokeLinecap="round" />
        <path d="M20 22v4M31 22v4" stroke="#7cc9b8" strokeWidth="3" strokeLinecap="round" />
      </svg>
    </button>
  );
}

function App() {
  return (
    <div className="relative flex h-screen flex-col overflow-hidden font-[Roboto,'Liberation_Sans',sans-serif]">
      <Header />
      <TabBar />
      <Toolbar />
      <main className="flex min-h-0 flex-1">
        <EditorPane />
        <PreviewPane />
        <SideRail />
      </main>
      <AssistantBubble />
      <CoPilot />
    </div>
  );
}

export default App;
